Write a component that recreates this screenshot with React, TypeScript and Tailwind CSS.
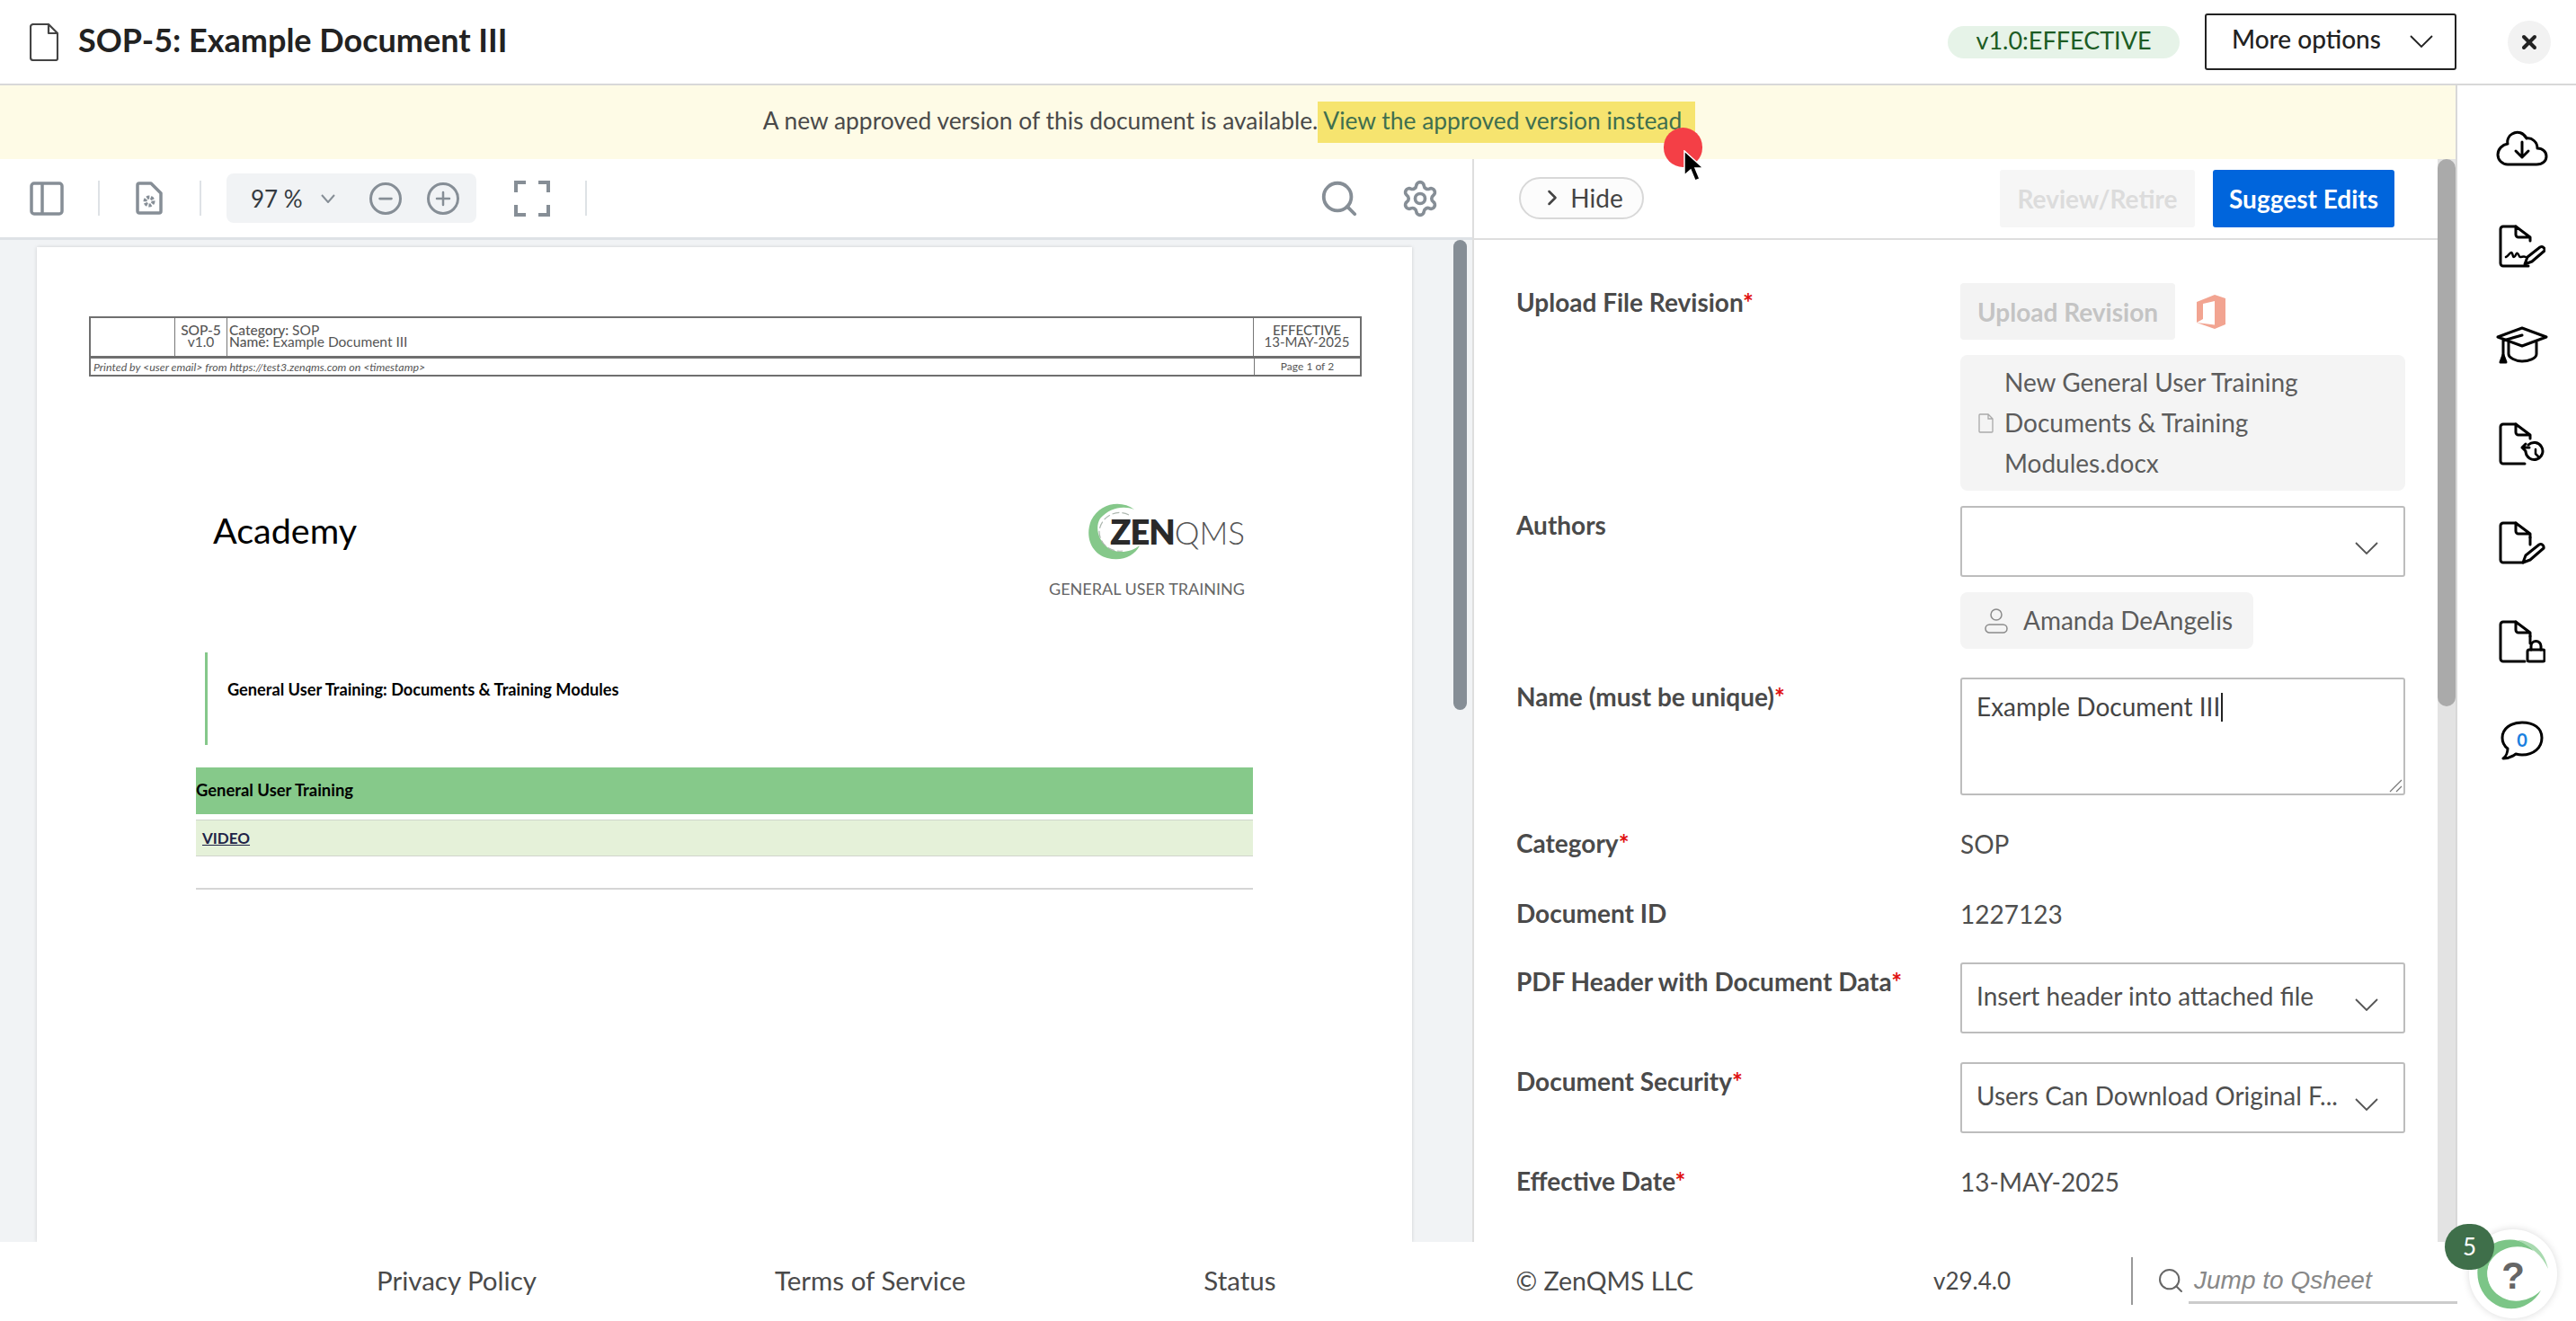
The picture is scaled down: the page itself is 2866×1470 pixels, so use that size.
import { ChevronRight, Minus, Plus, Search, Settings, X } from "lucide-react";
import React from "react";

function Req() {
  return <span className="text-[#e01010]">*</span>;
}

function Chevron({ className, color = "#555" }: { className?: string; color?: string }) {
  return (
    <svg className={className} width="26" height="14" viewBox="0 0 26 14" fill="none" stroke={color} strokeWidth="1.800">
      <path d="M1 1l12 12L25 1" />
    </svg>
  );
}

function Row({ label, req, children, className }: { label: string; req?: boolean; children: React.ReactNode; className?: string }) {
  return (
    <div className={`flex ${className ?? "mb-[32px]"}`}>
      <div className="w-[494px] shrink-0 pb-[2px] font-bold leading-[42px] text-[#4a4a4a]">
        {label}
        {req && <Req />}
      </div>
      <div className="w-[495px] shrink-0 leading-[44px] text-[#4f4f4f]">{children}</div>
    </div>
  );
}

function SelectBox({ text }: { text?: string }) {
  return (
    <div className="flex h-[79px] items-start justify-between rounded-[3px] border-2 border-[#bdbdbd] bg-white pl-[16px] pr-[28px] pt-[13px]">
      <span className="truncate text-[#4f4f4f]">{text}</span>
      <Chevron className="mt-[25px] ml-[8px] shrink-0" />
    </div>
  );
}

function DocShape({ bottom }: { bottom: number }) {
  return (
    <>
      <path d={`M19 2H5a3 3 0 0 0-3 3v38a3 3 0 0 0 3 3h${bottom}`} />
      <path d="M19 2 35 14v4M19 2v9a3 3 0 0 0 3 3h13" />
    </>
  );
}

function SideIcon({ children, w = 52, h = 48 }: { children: React.ReactNode; w?: number; h?: number }) {
  return (
    <div className="flex h-[110px] items-center justify-center">
      <svg width={w} height={h} viewBox={`0 0 ${w} ${h}`} fill="none" stroke="#000" strokeWidth="3" strokeLinecap="round" strokeLinejoin="round">
        {children}
      </svg>
    </div>
  );
}

function Sidebar() {
  return (
    <aside className="w-[134px] shrink-0 border-l-2 border-[#d8d8d8] bg-white pl-[12px] pt-[14px]">
      <SideIcon w={58} h={42}>
        <path d="M13 40h32c7 0 11-4 11-9s-4-9-10-9c0-7-6-12-12-11-3-6-10-9-16-5-4 2-6 7-5 11-6 1-11 6-11 12 0 6 5 11 11 11z" />
        <path d="M29 15v17M22 25l7 7 7-7" />
      </SideIcon>
      <SideIcon>
        <DocShape bottom={28} />
        <path d="M8 36c3-1 4-5 6-5s1 5 3 5 2-5 4-4 1 4 3 4 4-1 6 0" strokeWidth="2.5" />
        <path d="M29 44l3-8 14-11a3.5 3.5 0 0 1 5 4L37 41z" />
      </SideIcon>
      <SideIcon w={58} h={42}>
        <path d="M29 2 56 12 29 22 2 12z" />
        <path d="M14 18v13c0 4 8 8 15 8s16-3 16-8V18" />
        <path d="M29 10 8 16v16" />
        <path d="M8 32l-3 8h6z" fill="#000" />
      </SideIcon>
      <SideIcon>
        <DocShape bottom={24} />
        <path d="M34 28H26l4-4M26 28l4 4" />
        <path d="M30 33a9.500 9.500 0 1 0 3-8" />
        <path d="M41 30v5l3 3" strokeWidth="2.500" />
      </SideIcon>
      <SideIcon>
        <DocShape bottom={22} />
        <path d="M35 18v8" />
        <path d="M27 46l3-8 15-12a3.500 3.500 0 0 1 5 4L35 43z" />
      </SideIcon>
      <SideIcon>
        <DocShape bottom={24} />
        <path d="M35 18v8" />
        <rect x="32" y="33" width="19" height="13" rx="2" />
        <path d="M36 33v-4a5.500 5.500 0 0 1 11 0v4" />
      </SideIcon>
      <div className="relative flex h-[110px] items-center justify-center">
        <svg width="48" height="44" viewBox="0 0 48 44" fill="none" stroke="#000" strokeWidth="3" strokeLinejoin="round">
          <path d="M24 2C11 2 2 9 2 19c0 5 2 9 6 12 0 4-2 9-5 11 5 0 10-2 14-5 2 .5 5 1 7 1 13 0 22-8 22-19S37 2 24 2z" />
        </svg>
        <span className="absolute mt-[-3px] text-[20px] font-bold leading-none text-[#1a7fe0]">0</span>
      </div>
    </aside>
  );
}

function ToolDivider({ className }: { className: string }) {
  return <div className={`h-[39px] w-[2px] bg-[#dee2e6] ${className}`} />;
}

function PdfToolbar() {
  return (
    <div className="flex h-[90px] items-center border-b-[3px] border-[#dee2e6] bg-white pl-[33px]">
      <svg width="38" height="38" viewBox="0 0 38 38" fill="none" stroke="#868e96" strokeWidth="3.500">
        <rect x="2" y="2" width="34" height="34" rx="3" />
        <path d="M14 2v34" />
      </svg>
      <ToolDivider className="ml-[38px]" />
      <svg className="ml-[40px]" width="30" height="37" viewBox="0 0 30 37" fill="none" stroke="#868e96" strokeWidth="3.500" strokeLinejoin="round">
        <path d="M4 2h13l11 11v20a2 2 0 0 1-2 2H4a2 2 0 0 1-2-2V4a2 2 0 0 1 2-2z" />
        <circle cx="15" cy="22" r="4.500" strokeWidth="4" strokeDasharray="3 1.500" />
      </svg>
      <ToolDivider className="ml-[41px]" />
      <div className="ml-[28px] flex h-[55px] w-[278px] items-center rounded-[8px] bg-[#f1f3f5] pl-[27px]">
        <span className="w-[54px] whitespace-nowrap text-[26px] leading-none text-[#343a40]">97 %</span>
        <svg className="ml-[24px]" width="16" height="10" viewBox="0 0 16 10" fill="none" stroke="#868e96" strokeWidth="2">
          <path d="M1 1l7 8 7-8" />
        </svg>
        <div className="ml-[38px] flex h-[36px] w-[36px] items-center justify-center rounded-full border-[3px] border-[#868e96]">
          <Minus className="h-[22px] w-[22px] text-[#868e96]" strokeWidth={3} />
        </div>
        <div className="ml-[28px] flex h-[36px] w-[36px] items-center justify-center rounded-full border-[3px] border-[#868e96]">
          <Plus className="h-[24px] w-[24px] text-[#868e96]" strokeWidth={2.500} />
        </div>
      </div>
      <svg className="ml-[42px]" width="40" height="40" viewBox="0 0 40 40" fill="none" stroke="#868e96" strokeWidth="4">
        <path d="M2 13V2h11M27 2h11v11M38 27v11H27M13 38H2V27" />
      </svg>
      <ToolDivider className="ml-[39px]" />
      <Search className="ml-[814px] h-[46px] w-[46px] text-[#868e96]" strokeWidth={2} />
      <Settings className="ml-[45px] h-[44px] w-[44px] text-[#868e96]" strokeWidth={2} />
    </div>
  );
}

function PdfHeaderTable() {
  return (
    <div className="ml-[58px] mr-[56px] border-2 border-[#6f6f6f] text-[15.500px] leading-[13px] text-[#555]">
      <div className="flex h-[45px] border-b-[3px] border-[#6f6f6f]">
        <div className="w-[94px] border-r border-[#777]" />
        <div className="w-[58px] border-r border-[#777] pt-[7px] text-center">
          <div className="font-medium">SOP-5</div>
          <div>v1.0</div>
        </div>
        <div className="flex-1 pl-[2px] pt-[7px]">
          <div><span className="font-medium">Category:</span> SOP</div>
          <div><span className="font-medium">Name:</span> Example Document III</div>
        </div>
        <div className="w-[119px] border-l border-[#777] pt-[7px] text-center text-[15px]">
          <div className="font-medium">EFFECTIVE</div>
          <div>13-MAY-2025</div>
        </div>
      </div>
      <div className="flex h-[18px] items-center text-[12.400px]">
        <span className="flex-1 pl-[3px] italic">Printed by &lt;user email&gt; from https://test3.zenqms.com on &lt;timestamp&gt;</span>
        <span className="w-[118px] border-l border-[#777] text-center text-[12px] leading-[18px]">Page 1 of 2</span>
      </div>
    </div>
  );
}

function ZenLogo() {
  return (
    <div className="relative flex h-[64px] w-[175px] items-center justify-end">
      <svg className="absolute left-0 top-0" width="64" height="64" viewBox="0 0 64 64" fill="none">
        <path d="M52 8C38-3 14 0 4 20c-8 20 2 38 18 42 16 4 30-2 36-14-10 8-26 10-36 2C12 42 8 28 14 18 24 6 40 3 52 8z" fill="#85c88a" />
        <path d="M46 14C30 6 14 18 13 32c0 14 12 24 26 22" stroke="#aeb8b0" strokeWidth="1.200" strokeDasharray="8 3" />
      </svg>
      <span className="relative whitespace-nowrap leading-none text-[#2a2a2a]">
        <span className="text-[38px] font-extrabold tracking-[-1px]">ZEN</span>
        <span className="text-[35px] font-light text-[#555]">QMS</span>
      </span>
    </div>
  );
}

function PdfPage() {
  return (
    <div className="mt-[8px] ml-[41px] w-[1530px] shrink-0 bg-white pt-[77px] shadow-[0_0_4px_rgba(0,0,0,0.15)]">
      <PdfHeaderTable />
      <div className="mx-[177px] mt-[140px]">
        <div className="flex items-start justify-between pr-[9px]">
          <div className="ml-[19px] mt-[7px] text-[39.500px] leading-[48px] text-black">Academy</div>
          <div className="flex flex-col items-end">
            <ZenLogo />
            <div className="mt-[21px] text-[18px] leading-[22px] text-[#666]">GENERAL USER TRAINING</div>
          </div>
        </div>
        <div className="ml-[10px] mt-[60px] flex h-[103px] items-start border-l-[3px] border-[#85c88a] pl-[22px] pt-[30px] text-[18.200px] font-bold leading-[22px] text-black">
          General User Training: Documents &amp; Training Modules
        </div>
        <div className="mt-[25px] flex h-[52px] items-center bg-[#86c98a] text-[18.400px] font-bold text-black">General User Training</div>
        <div className="mt-[6px] flex h-[41px] items-center border-y border-[#d0d5cc] bg-[#e5f1d9] pl-[7px] text-[17px] font-bold text-[#1f2347]">
          <span className="underline">VIDEO</span>
        </div>
        <div className="mt-[35px] h-[2px] bg-[#d5d5d5]" />
      </div>
    </div>
  );
}

function DocumentForm() {
  return (
    <div className="flex-1 overflow-hidden pl-[47px] pt-[48px] text-[28px]">
      <Row label="Upload File Revision" req className="mb-[17px]">
        <div className="flex items-center">
          <div className="flex h-[63px] w-[239px] items-center justify-center rounded-[4px] bg-[#f3f3f3] font-bold text-[#c4c4c4]">Upload Revision</div>
          <svg className="ml-[24px]" width="32" height="38" viewBox="0 0 32 38" fill="#f2a491">
            <path d="M0 8 20 0l12 4v29L20 38 0 31l20 2.500V7L7 10v17l-7 4z" />
          </svg>
        </div>
        <div className="mt-[17px] flex h-[151px] items-center rounded-[8px] bg-[#f4f4f4] pl-[20px]">
          <svg width="17" height="22" viewBox="0 0 17 22" fill="none" stroke="#a9a9a9" strokeWidth="1.300">
            <path d="M2 1h9l5 5v14a1 1 0 0 1-1 1H2a1 1 0 0 1-1-1V2a1 1 0 0 1 1-1zM11 1v5h5" />
          </svg>
          <div className="ml-[12px] w-[420px] leading-[45px] text-[#5c5c5c]">New General User Training Documents &amp; Training Modules.docx</div>
        </div>
      </Row>
      <Row label="Authors">
        <SelectBox />
        <div className="mt-[17px] flex h-[63px] w-[326px] items-center rounded-[8px] bg-[#f4f4f4] pl-[27px] text-[#5c5c5c]">
          <svg width="26" height="28" viewBox="0 0 26 28" fill="none" stroke="#8a8a8a" strokeWidth="1.500">
            <circle cx="13" cy="7" r="6" />
            <rect x="1" y="18" width="24" height="9" rx="4.500" />
          </svg>
          <span className="ml-[17px] pb-[1px]">Amanda DeAngelis</span>
        </div>
      </Row>
      <Row label="Name (must be unique)" req>
        <div className="relative h-[131px] rounded-[3px] border-2 border-[#bdbdbd] pl-[16px] pt-[8px] text-[#444]">
          Example Document III<span className="ml-[1px] inline-block h-[32px] w-[2px] translate-y-[6px] bg-[#222]" />
          <svg className="absolute bottom-[1px] right-[1px]" width="15" height="15" viewBox="0 0 15 15" stroke="#777" strokeWidth="1.200">
            <path d="M1 14 14 1M8 14l6-6" />
          </svg>
        </div>
      </Row>
      <Row label="Category" req className="mb-[34px]">SOP</Row>
      <Row label="Document ID">1227123</Row>
      <Row label="PDF Header with Document Data" req><SelectBox text="Insert header into attached file" /></Row>
      <Row label="Document Security" req><SelectBox text="Users Can Download Original F..." /></Row>
      <Row label="Effective Date" req>13-MAY-2025</Row>
    </div>
  );
}

function RightToolbar() {
  return (
    <div className="flex h-[90px] items-start border-b-[2px] border-[#dedede] pl-[50px] pt-[12px]">
      <div className="mt-[8px] flex h-[47px] w-[139px] items-center justify-center rounded-full border-2 border-[#d8d8d8] bg-[#fcfcfc] pb-[2px] text-[28px] text-[#444]">
        <ChevronRight className="h-[28px] w-[28px]" strokeWidth={2.200} />
        <span className="ml-[6px]">Hide</span>
      </div>
      <div className="ml-[396px] flex h-[64px] w-[217px] items-center justify-center rounded-[3px] bg-[#f6f6f6] text-[28px] font-bold text-[#dcdcdc]">Review/Retire</div>
      <div className="ml-[20px] flex h-[64px] w-[202px] items-center justify-center rounded-[3px] bg-[#0065dc] text-[28px] font-bold text-white">Suggest Edits</div>
    </div>
  );
}

function Footer() {
  return (
    <footer className="relative flex h-[88px] shrink-0 items-center bg-white pb-[2px] pl-[419px] text-[29.500px] text-[#4a4a4a]">
      <span>Privacy Policy</span>
      <span className="ml-[265px]">Terms of Service</span>
      <span className="ml-[265px]">Status</span>
      <span className="ml-[267px] text-[28.500px]">© ZenQMS LLC</span>
      <span className="ml-[267px] text-[26px]">v29.4.0</span>
      <div className="ml-[134px] h-[53px] w-[2px] bg-[#999]" />
      <Search className="ml-[26px] h-[32px] w-[32px] text-[#666]" strokeWidth={1.500} />
      <div className="ml-[4px] h-[52px] w-[299px] border-b-[3px] border-[#ccc] pl-[6px] pt-[6px] font-['Liberation_Sans'] text-[28px] italic leading-[40px] text-[#888]">Jump to Qsheet</div>
      <div className="absolute left-[2747px] top-[-14px] flex h-[99px] w-[98px] items-center justify-center rounded-full bg-white shadow-[0_0_8px_rgba(0,0,0,0.15)]">
        <svg className="absolute inset-0" width="98" height="99" viewBox="0 0 98 99" fill="none">
          <path d="M72 24C58 6 28 8 16 26 4 44 8 72 30 84c18 10 40 2 50-16-12 12-32 16-46 6C18 64 16 42 28 30c12-12 30-14 44-6z" fill="#7cc587" />
          <path d="M54 12c16 0 30 12 34 32-6-14-18-24-34-32z" fill="#a9dab0" />
          <path d="M24 36c-6 14-2 30 12 38M32 30c-6 8-8 18-4 28" stroke="#fff" strokeWidth="1.500" />
        </svg>
        <span className="relative pt-[4px] font-['Liberation_Sans'] text-[42px] font-bold leading-none text-[#666]">?</span>
      </div>
      <div className="absolute left-[2720px] top-[-20px] flex h-[51px] w-[55px] items-center justify-center rounded-full bg-[#3f6f4a] text-[26px] text-white">5</div>
    </footer>
  );
}

export default function App() {
  return (
    <div className="relative flex h-[1470px] w-[2866px] flex-col overflow-hidden bg-white font-[Lato,sans-serif]">
      <header className="flex h-[95px] shrink-0 items-center border-b-2 border-[#d8d8d8] pl-[33px] pr-[28px]">
        <svg width="32" height="42" viewBox="0 0 32 42" fill="none" stroke="#444" strokeWidth="2.200" strokeLinejoin="round">
          <path d="M4 1h17l10 10v28a2 2 0 0 1-2 2H4a3 3 0 0 1-3-3V4a3 3 0 0 1 3-3zM21 1v10h10" />
        </svg>
        <h1 className="ml-[22px] pb-[6px] text-[36px] font-bold text-[#222]">SOP-5: Example Document III</h1>
        <div className="ml-auto flex h-[36px] w-[258px] items-center justify-center rounded-full bg-[#e6f3e8] pb-[3px] text-[27px] text-[#1c5c24]">v1.0:EFFECTIVE</div>
        <div className="ml-[28px] flex h-[63px] w-[280px] items-center justify-between rounded-[3px] border-2 border-[#222] pb-[7px] pl-[28px] pr-[24px] text-[28px] font-medium text-[#222]">
          More options
          <Chevron className="mt-[5px]" color="#222" />
        </div>
        <div className="ml-[57px] flex h-[48px] w-[48px] items-center justify-center rounded-full bg-[#f2f2f2]">
          <X className="h-[24px] w-[24px] text-[#222]" strokeWidth={4} />
        </div>
      </header>

      <div className="flex min-h-0 flex-1">
        <div className="flex w-[2732px] shrink-0 flex-col">
          <div className="flex h-[82px] shrink-0 items-center justify-center bg-[#fefbe6] pl-[3px] text-[26.400px] text-[#4a4a4a]">
            <span className="pb-[2px]">A new approved version of this document is available.</span>
            <span className="flex h-[46px] items-center bg-[#f6e46f] pb-[2px] pl-[6px] pr-[15px] text-[#3f6f4f]">View the approved version instead</span>
          </div>
          <div className="flex min-h-0 flex-1">
            <section className="flex w-[1638px] shrink-0 flex-col bg-[#f1f3f5]">
              <PdfToolbar />
              <div className="flex min-h-0 flex-1 overflow-hidden">
                <PdfPage />
                <div className="ml-[46px] h-[523px] w-[15px] rounded-full bg-[#868e96]" />
              </div>
            </section>
            <section className="flex w-[1074px] shrink-0 flex-col border-l-2 border-[#dedede] bg-white">
              <RightToolbar />
              <DocumentForm />
            </section>
            <div className="w-[20px] shrink-0 bg-[#e3e3e3]">
              <div className="h-[609px] rounded-full bg-[#aaaaaa]" />
            </div>
          </div>
        </div>
        <Sidebar />
      </div>

      <Footer />

      {/* recording cursor sits over the banner */}
      <div className="absolute left-[1851px] top-[142px] h-[44px] w-[43px] rounded-full bg-[#f43f46]" />
      <svg className="absolute left-[1872px] top-[167px]" width="24" height="36" viewBox="0 0 24 36">
        <path d="M2 1v27l7-6 5 12 5-2-5-12h9z" fill="#000" stroke="#fff" strokeWidth="1.500" />
      </svg>
    </div>
  );
}
